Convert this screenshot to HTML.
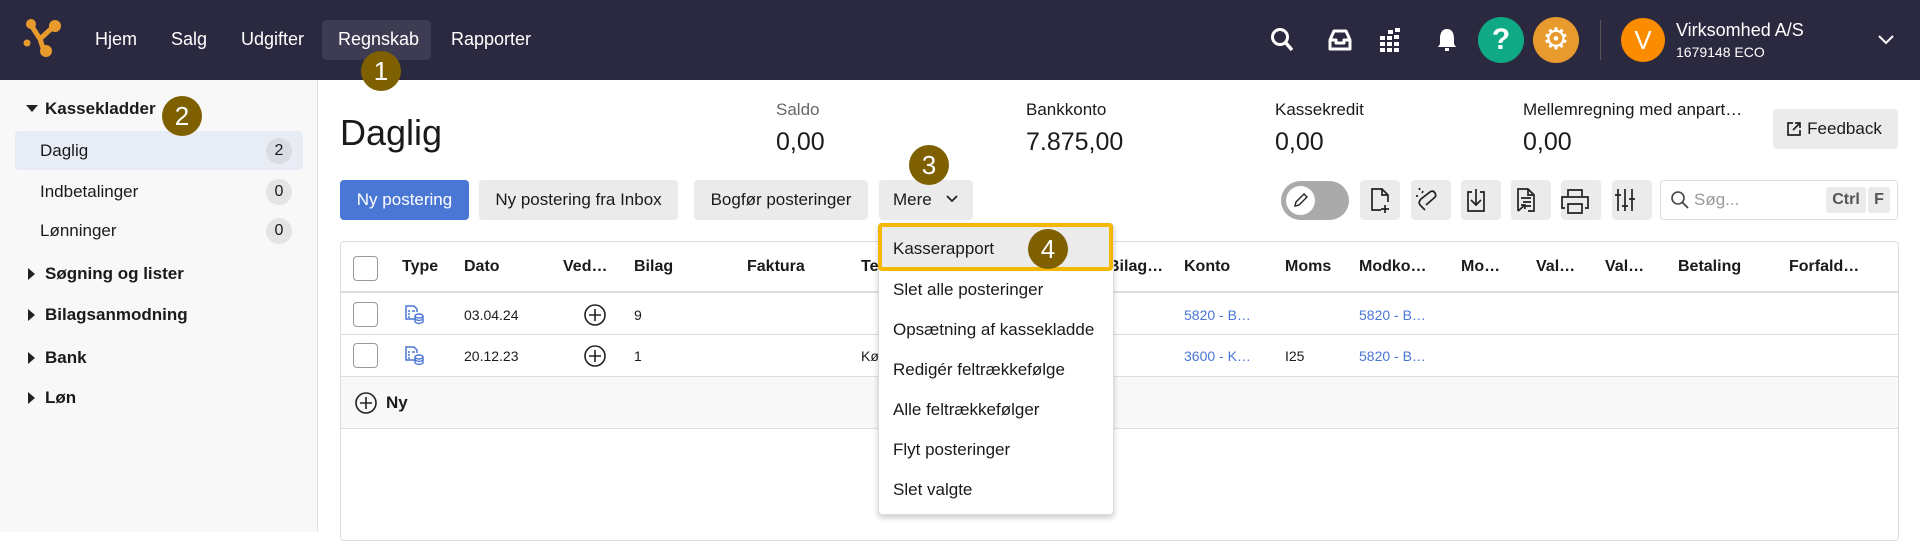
<!DOCTYPE html>
<html><head><meta charset="utf-8"><style>
*{box-sizing:border-box;margin:0;padding:0}
body{width:1920px;height:532px;overflow:hidden;font-family:"Liberation Sans",sans-serif;color:#1a1a1a;background:#fff;position:relative}
.a{position:absolute;white-space:nowrap}
.nav{left:0;top:0;width:1920px;height:80px;background:#2a2940}
.ni{color:#fff;font-size:18px;top:29px}
.badge{width:40px;height:40px;border-radius:50%;background:#7f6000;color:#fff;font-size:26px;text-align:center;line-height:40px;z-index:10}
.side{left:0;top:80px;width:318px;height:452px;background:#f8f8f8;border-right:1px solid #e0e0e0}
.si{font-size:17px;left:40px}
.cnt{width:26px;height:26px;border-radius:50%;background:#e4e4e4;font-size:16px;text-align:center;line-height:26px;left:266px}
.sh{font-size:17px;font-weight:bold;left:45px}
.tri{left:28px;width:0;height:0}
.btn{background:#ebebeb;border-radius:4px;font-size:17px;text-align:center;line-height:40px;height:40px;top:180px}
.ib{background:#ebebeb;border-radius:4px;width:40px;height:40px;top:180px}
.th{font-size:16px;font-weight:bold;top:258px}
.td{font-size:14px}
.lnk{color:#4a76d4;font-size:14px}
.cb{width:25px;height:25px;border:1px solid #999;border-radius:4px;background:#fff}
.mi{font-size:17px;left:893px}
</style></head><body>
<div class="a nav"></div>
<svg class="a" style="left:22px;top:17px" width="40" height="44" viewBox="0 0 40 44"><path d="M9 8 L18 22 L31 10 M18 22 L22 34" stroke="#e89a2c" stroke-width="5" fill="none"/><circle cx="9" cy="7" r="5" fill="#e89a2c"/><circle cx="33" cy="9" r="6" fill="#e89a2c"/><circle cx="24" cy="34" r="6" fill="#e89a2c"/><circle cx="5" cy="26" r="3.5" fill="#e89a2c"/></svg>
<div class="a ni" style="left:95px">Hjem</div>
<div class="a ni" style="left:171px">Salg</div>
<div class="a ni" style="left:241px">Udgifter</div>
<div class="a" style="left:322px;top:20px;width:109px;height:40px;background:#3d3c52;border-radius:5px"></div>
<div class="a ni" style="left:338px">Regnskab</div>
<div class="a ni" style="left:451px">Rapporter</div>
<div class="a badge" style="left:361px;top:51px">1</div>
<svg class="a" style="left:1270px;top:27px" width="24" height="26" viewBox="0 0 24 26"><circle cx="10" cy="10" r="7.5" stroke="#fff" stroke-width="3" fill="none"/><path d="M15.5 15.5 L22 23" stroke="#fff" stroke-width="3.5"/></svg>
<svg class="a" style="left:1327px;top:28px" width="26" height="24" viewBox="0 0 26 24"><path d="M3 12 L7 3 H19 L23 12 V21 H3 Z M3 12 H9 V15 H17 V12 H23" stroke="#fff" stroke-width="3" fill="none" stroke-linejoin="round"/></svg>
<svg class="a" style="left:1380px;top:28px" width="22" height="24" viewBox="0 0 22 24"><g fill="#fff"><rect x="0" y="8" width="5" height="4"/><rect x="7" y="8" width="5" height="4"/><rect x="0" y="14" width="5" height="4"/><rect x="7" y="14" width="5" height="4"/><rect x="14" y="14" width="5" height="4"/><rect x="0" y="20" width="5" height="4"/><rect x="7" y="20" width="5" height="4"/><rect x="14" y="20" width="5" height="4"/><rect x="8" y="2" width="5" height="4"/><rect x="15" y="0" width="5" height="4"/><rect x="14" y="7" width="5" height="4"/></g></svg>
<svg class="a" style="left:1436px;top:27px" width="22" height="26" viewBox="0 0 22 26"><path d="M11 2 C5 2 4 8 4 12 V17 L2 20 H20 L18 17 V12 C18 8 17 2 11 2 Z" fill="#fff"/><rect x="9" y="21" width="4" height="3" fill="#fff"/></svg>
<div class="a" style="left:1478px;top:17px;width:46px;height:46px;border-radius:50%;background:#0fa985;color:#fff;font-weight:bold;font-size:30px;text-align:center;line-height:46px">?</div>
<div class="a" style="left:1533px;top:17px;width:46px;height:46px;border-radius:50%;background:#e89a2c;color:#fff;font-size:30px;text-align:center;line-height:46px">⚙</div>
<div class="a" style="left:1600px;top:20px;width:1px;height:40px;background:#555"></div>
<div class="a" style="left:1621px;top:18px;width:44px;height:44px;border-radius:50%;background:#fb8c00;color:#fff;font-size:26px;text-align:center;line-height:44px">V</div>
<div class="a" style="left:1676px;top:20px;color:#fff;font-size:18px">Virksomhed A/S</div>
<div class="a" style="left:1676px;top:44px;color:#fff;font-size:14px">1679148 ECO</div>
<svg class="a" style="left:1877px;top:34px" width="18" height="12" viewBox="0 0 18 12"><path d="M2 2 L9 9 L16 2" stroke="#fff" stroke-width="2" fill="none"/></svg>

<div class="a side"></div>
<div class="a tri" style="top:105px;border-left:6px solid transparent;border-right:6px solid transparent;border-top:7px solid #222;left:26px"></div>
<div class="a sh" style="top:99px">Kassekladder</div>
<div class="a badge" style="left:162px;top:96px">2</div>
<div class="a" style="left:15px;top:131px;width:288px;height:39px;background:#e8ecf4;border-radius:4px"></div>
<div class="a si" style="top:141px">Daglig</div>
<div class="a cnt" style="top:138px;background:#d9dce3">2</div>
<div class="a si" style="top:182px">Indbetalinger</div>
<div class="a cnt" style="top:179px">0</div>
<div class="a si" style="top:221px">Lønninger</div>
<div class="a cnt" style="top:218px">0</div>
<div class="a tri" style="top:268px;border-top:6px solid transparent;border-bottom:6px solid transparent;border-left:7px solid #222"></div>
<div class="a sh" style="top:264px">Søgning og lister</div>
<div class="a tri" style="top:309px;border-top:6px solid transparent;border-bottom:6px solid transparent;border-left:7px solid #222"></div>
<div class="a sh" style="top:305px">Bilagsanmodning</div>
<div class="a tri" style="top:352px;border-top:6px solid transparent;border-bottom:6px solid transparent;border-left:7px solid #222"></div>
<div class="a sh" style="top:348px">Bank</div>
<div class="a tri" style="top:392px;border-top:6px solid transparent;border-bottom:6px solid transparent;border-left:7px solid #222"></div>
<div class="a sh" style="top:388px">Løn</div>

<div class="a" style="left:340px;top:112px;font-size:36px">Daglig</div>
<div class="a" style="left:776px;top:100px;font-size:17px;color:#666">Saldo</div>
<div class="a" style="left:776px;top:128px;font-size:25px">0,00</div>
<div class="a" style="left:1026px;top:100px;font-size:17px">Bankkonto</div>
<div class="a" style="left:1026px;top:128px;font-size:25px">7.875,00</div>
<div class="a" style="left:1275px;top:100px;font-size:17px">Kassekredit</div>
<div class="a" style="left:1275px;top:128px;font-size:25px">0,00</div>
<div class="a" style="left:1523px;top:100px;font-size:17px">Mellemregning med anpart…</div>
<div class="a" style="left:1523px;top:128px;font-size:25px">0,00</div>
<div class="a btn" style="left:1773px;top:109px;width:125px;font-size:17px;padding-left:18px">Feedback</div>
<svg class="a" style="left:1786px;top:121px" width="16" height="16" viewBox="0 0 16 16"><path d="M7 2 H2 V14 H14 V9 M9 2 H14 V7 M14 2 L7 9" stroke="#222" stroke-width="1.7" fill="none"/></svg>

<div class="a btn" style="left:340px;width:129px;background:#4a76d4;color:#fff">Ny postering</div>
<div class="a btn" style="left:479px;width:199px">Ny postering fra Inbox</div>
<div class="a btn" style="left:694px;width:174px">Bogfør posteringer</div>
<div class="a btn" style="left:879px;width:94px;text-align:left;padding-left:14px">Mere</div>
<svg class="a" style="left:945px;top:194px" width="14" height="10" viewBox="0 0 14 10"><path d="M2 2 L7 7 L12 2" stroke="#222" stroke-width="1.8" fill="none"/></svg>
<div class="a badge" style="left:909px;top:145px">3</div>

<div class="a" style="left:1281px;top:181px;width:68px;height:39px;border-radius:20px;background:#aaa"></div>
<div class="a" style="left:1286px;top:186px;width:29px;height:29px;border-radius:50%;background:#fff"></div>
<svg class="a" style="left:1292px;top:192px" width="17" height="17" viewBox="0 0 17 17"><path d="M3 14 L4 10 L12 2 L15 5 L7 13 Z" stroke="#222" stroke-width="1.4" fill="none"/></svg>
<div class="a ib" style="left:1360px"></div>
<div class="a ib" style="left:1411px"></div>
<div class="a ib" style="left:1461px"></div>
<div class="a ib" style="left:1511px"></div>
<div class="a ib" style="left:1561px"></div>
<div class="a ib" style="left:1612px"></div>
<svg class="a" style="left:1360px;top:180px" width="300" height="40" viewBox="0 0 300 40" fill="none" stroke="#222" stroke-width="1.7">
<path d="M21 30 H12 V9 H22 L28 15 V22 M22 9 V15 H28 M25 25 V33 M21 29 H29"/>
<path d="M65 30 L60 25 Q58 22 61 19 L70 12 Q73 10 75 13 Q77 16 74 18 L66 25 M62 13 L63 11 M58 16 L56 16 M60 10 L59 8"/>
<path d="M112 12 H108 V31 H124 V12 H120 M116 9 V24 M111 20 L116 25 L121 20"/>
<path d="M160 30 H158 V9 H168 L174 15 V31 H168 M168 9 V15 H174 M161 18 H171 M163 22 H171 M166 26 H171 M158 31 L165 25 M161 25 H165 V29"/>
<path d="M208 16 V10 H222 V16 M205 28 H202 V17 H228 V28 H225 M208 24 H222 V33 H208 Z"/>
<path d="M258 9 V31 M265 9 V31 M272 9 V31 M255 15 H261 M262 26 H268 M269 19 H275"/>
</svg>
<div class="a" style="left:1660px;top:180px;width:238px;height:40px;border:1px solid #ddd;border-radius:4px"></div>
<svg class="a" style="left:1670px;top:190px" width="20" height="20" viewBox="0 0 20 20"><circle cx="8" cy="8" r="6" stroke="#444" stroke-width="1.6" fill="none"/><path d="M12.5 12.5 L18 18" stroke="#444" stroke-width="1.8"/></svg>
<div class="a" style="left:1694px;top:190px;font-size:17px;color:#999">Søg...</div>
<div class="a" style="left:1826px;top:187px;width:40px;height:26px;background:#ebebeb;border-radius:3px;font-size:16px;font-weight:bold;color:#555;text-align:center;line-height:26px">Ctrl</div>
<div class="a" style="left:1868px;top:187px;width:22px;height:26px;background:#ebebeb;border-radius:3px;font-size:16px;font-weight:bold;color:#555;text-align:center;line-height:26px">F</div>

<div class="a" style="left:340px;top:241px;width:1559px;height:300px;border:1px solid #ddd;border-radius:4px"></div>
<div class="a" style="left:341px;top:291px;width:1557px;height:2px;background:#ddd"></div>
<div class="a" style="left:341px;top:334px;width:1557px;height:1px;background:#ddd"></div>
<div class="a" style="left:341px;top:376px;width:1557px;height:53px;background:#f8f8f8;border-top:1px solid #ddd;border-bottom:1px solid #ddd"></div>
<div class="a cb" style="left:353px;top:256px"></div>
<div class="a th" style="left:402px">Type</div>
<div class="a th" style="left:464px">Dato</div>
<div class="a th" style="left:563px">Ved…</div>
<div class="a th" style="left:634px">Bilag</div>
<div class="a th" style="left:747px">Faktura</div>
<div class="a th" style="left:861px">Te</div>
<div class="a th" style="left:1108px">Bilag…</div>
<div class="a th" style="left:1184px">Konto</div>
<div class="a th" style="left:1285px">Moms</div>
<div class="a th" style="left:1359px">Modko…</div>
<div class="a th" style="left:1461px">Mo…</div>
<div class="a th" style="left:1536px">Val…</div>
<div class="a th" style="left:1605px">Val…</div>
<div class="a th" style="left:1678px">Betaling</div>
<div class="a th" style="left:1789px">Forfald…</div>

<div class="a cb" style="left:353px;top:302px"></div>
<div class="a cb" style="left:353px;top:343px"></div>
<svg class="a" style="left:404px;top:304px" width="20" height="22" viewBox="0 0 20 22"><path d="M12 15 H2 V2 H10 L13 5 V8" stroke="#4a76d4" stroke-width="1.5" fill="none"/><path d="M4 7 H6 M8 7 H11 M4 10 H6 M4 13 H6" stroke="#4a76d4" stroke-width="1.5"/><ellipse cx="15" cy="12" rx="4" ry="2" stroke="#4a76d4" stroke-width="1.4" fill="none"/><path d="M11 12 V18 Q15 21 19 18 V12 M11 15 Q15 18 19 15" stroke="#4a76d4" stroke-width="1.4" fill="none"/></svg>
<svg class="a" style="left:404px;top:345px" width="20" height="22" viewBox="0 0 20 22"><path d="M12 15 H2 V2 H10 L13 5 V8" stroke="#4a76d4" stroke-width="1.5" fill="none"/><path d="M4 7 H6 M8 7 H11 M4 10 H6 M4 13 H6" stroke="#4a76d4" stroke-width="1.5"/><ellipse cx="15" cy="12" rx="4" ry="2" stroke="#4a76d4" stroke-width="1.4" fill="none"/><path d="M11 12 V18 Q15 21 19 18 V12 M11 15 Q15 18 19 15" stroke="#4a76d4" stroke-width="1.4" fill="none"/></svg>
<div class="a td" style="left:464px;top:307px">03.04.24</div>
<div class="a td" style="left:464px;top:348px">20.12.23</div>
<svg class="a" style="left:583px;top:303px" width="24" height="24"><circle cx="12" cy="12" r="10" stroke="#222" stroke-width="1.6" fill="none"/><path d="M12 6 V18 M6 12 H18" stroke="#222" stroke-width="1.6"/></svg>
<svg class="a" style="left:583px;top:344px" width="24" height="24"><circle cx="12" cy="12" r="10" stroke="#222" stroke-width="1.6" fill="none"/><path d="M12 6 V18 M6 12 H18" stroke="#222" stroke-width="1.6"/></svg>
<div class="a td" style="left:634px;top:307px">9</div>
<div class="a td" style="left:634px;top:348px">1</div>
<div class="a td" style="left:861px;top:348px">Kø</div>
<div class="a lnk" style="left:1184px;top:307px">5820 - B…</div>
<div class="a lnk" style="left:1359px;top:307px">5820 - B…</div>
<div class="a lnk" style="left:1184px;top:348px">3600 - K…</div>
<div class="a td" style="left:1285px;top:348px">I25</div>
<div class="a lnk" style="left:1359px;top:348px">5820 - B…</div>
<svg class="a" style="left:354px;top:391px" width="24" height="24"><circle cx="12" cy="12" r="10" stroke="#222" stroke-width="1.6" fill="none"/><path d="M12 6 V18 M6 12 H18" stroke="#222" stroke-width="1.6"/></svg>
<div class="a" style="left:386px;top:393px;font-size:17px;font-weight:bold">Ny</div>

<div class="a" style="left:878px;top:223px;width:236px;height:292px;background:#fff;border:1px solid #ddd;border-radius:4px;box-shadow:0 3px 6px rgba(0,0,0,.2)"></div>
<div class="a" style="left:878px;top:223px;width:235px;height:48px;background:#ebebeb;border:4px solid #f5b800;border-radius:4px"></div>
<div class="a mi" style="top:239px">Kasserapport</div>
<div class="a badge" style="left:1028px;top:229px">4</div>
<div class="a mi" style="top:280px">Slet alle posteringer</div>
<div class="a mi" style="top:320px">Opsætning af kassekladde</div>
<div class="a mi" style="top:360px">Redigér feltrækkefølge</div>
<div class="a mi" style="top:400px">Alle feltrækkefølger</div>
<div class="a mi" style="top:440px">Flyt posteringer</div>
<div class="a mi" style="top:480px">Slet valgte</div>
</body></html>
